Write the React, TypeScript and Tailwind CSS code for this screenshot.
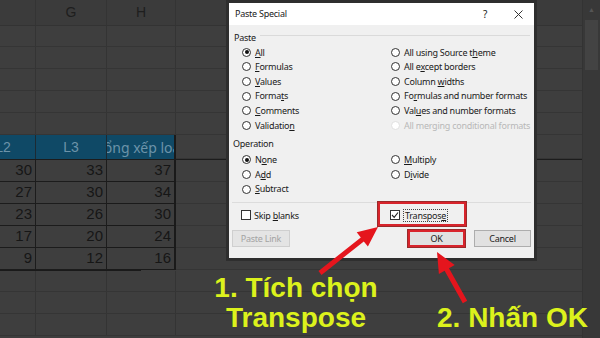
import React from 'react'

// ── Sheet data ────────────────────────────────────────────────────────────────
const rowsData = [
  [30, 33, 37],
  [27, 30, 34],
  [23, 26, 30],
  [17, 20, 24],
  [9, 12, 16],
]

const cell = 'border-r border-[#343434] shrink-0'

function PlainRow({ h }: { h: string }) {
  return (
    <div className={`flex border-b border-[#353535] ${h}`}>
      <div className={`${cell} w-[71px] ml-[-35px]`} />
      <div className={`${cell} w-[71px]`} />
      <div className={`${cell} w-[69px]`} />
      <div className="flex-1" />
    </div>
  )
}

function Sheet() {
  const num = 'flex items-center justify-end pr-[3px] text-[15px] text-[#161616]'
  return (
    <div className="flex h-[338px] w-[600px] bg-[#3e3e3e] overflow-hidden font-['Liberation_Sans',sans-serif]">
      <div className="flex w-[583px] flex-col border-r border-[#333]">
        {/* column headers */}
        <div className="flex h-[26px] border-b border-[#333] bg-[#3b3b3b] text-[14px] text-[#1e1e1e]">
          <div className={`${cell} w-[71px] ml-[-35px]`} />
          <div className={`${cell} w-[71px] flex items-center justify-center`}>G</div>
          <div className={`${cell} w-[69px] flex items-center justify-center`}>H</div>
          <div className="flex-1" />
        </div>
        <PlainRow h="h-[21px]" />
        <PlainRow h="h-[22px]" />
        <PlainRow h="h-[22px]" />
        <PlainRow h="h-[22px]" />
        <PlainRow h="h-[22px]" />
        {/* table header */}
        <div className="flex h-[25px] border-b border-[#1c1c1c]">
          <div className="flex w-[71px] ml-[-35px] shrink-0 items-center justify-center border-r border-[#1c2a33] bg-[#0f4966] pl-[6px] text-[14px] text-[#6c93a9]">L2</div>
          <div className="flex w-[71px] shrink-0 items-center justify-center border-r border-[#1c2a33] bg-[#0f4966] text-[14px] text-[#6c93a9]">L3</div>
          <div className="flex w-[69px] shrink-0 items-center justify-center overflow-hidden whitespace-nowrap border-r-2 border-[#1a1a1a] bg-[#0f4966] text-[14px] text-[#6c93a9] font-['Noto_Sans',sans-serif]">Tổng xếp loại</div>
          <div className="flex-1 border-b border-[#353535]" />
        </div>
        {rowsData.map((r, i) => (
          <div key={i} className="flex h-[22px]">
            <div className={`${num} w-[71px] ml-[-35px] shrink-0 border-r border-b border-[#1c1c1c]`}>{r[0]}</div>
            <div className={`${num} w-[71px] shrink-0 border-r border-b border-[#1c1c1c]`}>{r[1]}</div>
            <div className={`${num} w-[69px] shrink-0 border-r-2 border-b border-[#1a1a1a]`}>{r[2]}</div>
            <div className="flex-1 border-b border-[#353535]" />
          </div>
        ))}
        <div className="border-t border-[#1a1a1a] w-[141px]" />
        <PlainRow h="h-[21px]" />
        <PlainRow h="h-[22px]" />
        <PlainRow h="h-[22px]" />
      </div>
      {/* scrollbar */}
      <div className="flex w-[17px] flex-col bg-[#383838]">
        <div className="flex h-[20px] items-center justify-center text-[7px] text-[#555]">▲</div>
        <div className="mx-[2px] h-[50px] bg-[#434343]" />
      </div>
    </div>
  )
}

// ── Dialog bits ───────────────────────────────────────────────────────────────
function Label({ text, u }: { text: string; u: number }) {
  return (
    <span className="whitespace-nowrap">
      {text.slice(0, u)}
      <span className="underline underline-offset-1">{text[u]}</span>
      {text.slice(u + 1)}
    </span>
  )
}

function Radio({ text, u, on, disabled }: { text: string; u: number; on?: boolean; disabled?: boolean }) {
  return (
    <div className={`flex h-[14.6px] items-center gap-[4px] whitespace-nowrap ${disabled ? 'text-[#b8b8b8]' : 'text-[#1a1a1a]'}`}>
      <span
        className={`flex h-[9px] w-[9px] shrink-0 items-center justify-center rounded-full border bg-white ${disabled ? 'border-[#e0e0e0]' : 'border-[#333]'}`}
      >
        {on && <span className="h-[4px] w-[4px] rounded-full bg-[#111]" />}
      </span>
      {disabled ? <span>{text}</span> : <Label text={text} u={u} />}
    </div>
  )
}

function Dialog() {
  return (
    <div className="absolute left-[226px] top-0 flex h-[261px] w-[311px] flex-col border-[3px] border-[#2e2e2e] bg-[#f0f0f0] font-['Noto_Sans',sans-serif] text-[9px] tracking-[-0.25px] text-[#1a1a1a]">
      {/* title */}
      <div className="flex h-[22px] items-center bg-white pl-[6px] pr-[13px] text-[9px]">
        <span className="flex-1">Paste Special</span>
        <span className="mr-[27px] text-[10px]">?</span>
        <svg width="9" height="9" viewBox="0 0 9 9" className="mr-[-2px]">
          <path d="M0.5 0.5 L8.5 8.5 M8.5 0.5 L0.5 8.5" stroke="#333" strokeWidth="1" />
        </svg>
      </div>
      {/* Paste group */}
      <div className="mt-[6px] flex h-[14px] items-center gap-[4px] pl-[5px] pr-[4px]">
        <span>Paste</span>
        <div className="mb-[6px] h-px flex-1 bg-[#dadada]" />
      </div>
      <div className="grid grid-cols-[149px_1fr] pl-[13px]">
        <div className="flex flex-col">
          <Radio text="All" u={0} on />
          <Radio text="Formulas" u={0} />
          <Radio text="Values" u={0} />
          <Radio text="Formats" u={5} />
          <Radio text="Comments" u={0} />
          <Radio text="Validation" u={9} />
        </div>
        <div className="flex flex-col">
          <Radio text="All using Source theme" u={18} />
          <Radio text="All except borders" u={5} />
          <Radio text="Column widths" u={7} />
          <Radio text="Formulas and number formats" u={2} />
          <Radio text="Values and number formats" u={3} />
          <Radio text="All merging conditional formats" u={0} disabled />
        </div>
      </div>
      {/* Operation group */}
      <div className="mt-[4px] flex h-[14px] items-center pl-[4px]">Operation</div>
      <div className="mt-[2px] grid grid-cols-[149px_1fr] pl-[13px]">
        <div className="flex flex-col">
          <Radio text="None" u={1} on />
          <Radio text="Add" u={1} />
          <Radio text="Subtract" u={0} />
        </div>
        <div className="flex flex-col">
          <Radio text="Multiply" u={0} />
          <Radio text="Divide" u={1} />
        </div>
      </div>
      <div className="mx-[3px] mt-[6px] h-px bg-[#dcdcdc]" />
      {/* checkboxes */}
      <div className="mt-[5px] grid h-[14px] grid-cols-[149px_1fr] pl-[12px]">
        <div className="flex items-center gap-[3px]">
          <span className="h-[10px] w-[10px] border border-[#333] bg-white" />
          <Label text="Skip blanks" u={5} />
        </div>
        <div className="relative flex items-center gap-[3px]">
          <span className="flex h-[10px] w-[10px] items-center justify-center border border-[#333] bg-white">
            <svg width="8" height="8" viewBox="0 0 8 8">
              <path d="M1 4 L3.2 6.3 L7 1.5" fill="none" stroke="#222" strokeWidth="1.1" />
            </svg>
          </span>
          <span className="border border-dotted border-[#444] px-px leading-[11px]">
            <Label text="Transpose" u={8} />
          </span>
          <div className="absolute left-[-12px] top-[-6px] h-[24px] w-[88px] border-2 border-[#d8242c] shadow-[0_0_0_1px_#9a2a2a]" />
        </div>
      </div>
      {/* buttons */}
      <div className="mt-[8px] flex h-[17px] pl-[3px]">
        <div className="flex w-[58px] items-center justify-center border border-[#cfcfcf] bg-[#e4e4e4] text-[#a3a3a3]">Paste Link</div>
        <div className="ml-[118px] flex w-[57px] items-center justify-center border-2 border-[#d8242c] bg-[#e1e1e1] shadow-[0_0_0_1px_#9a2a2a]">OK</div>
        <div className="ml-[9px] flex w-[57px] items-center justify-center border border-[#adadad] bg-[#e1e1e1]">Cancel</div>
      </div>
    </div>
  )
}

// ── App ───────────────────────────────────────────────────────────────────────
export default function App() {
  return (
    <div className="relative h-[338px] w-[600px] overflow-hidden">
      <Sheet />
      <Dialog />
      {/* annotation arrows */}
      <svg className="pointer-events-none absolute left-0 top-0" width="600" height="338" viewBox="0 0 600 338">
        <polygon
          fill="#e5151d"
          points="378,227 356.7,232.3 360.8,237.4 318.5,271 321.5,275 363.8,241.4 367.9,246.5"
        />
        <polygon
          fill="#e5151d"
          points="437,252 454.7,265.1 449,268.3 467.2,300.8 462.8,303.2 444.6,270.7 438.9,273.9"
        />
      </svg>
      <div className="absolute left-[196px] top-[273px] w-[200px] text-center font-['Liberation_Sans',sans-serif] text-[28px] font-bold leading-[30px] text-[#dcf21c]">
        1. Tích chọn
        <br />
        Transpose
      </div>
      <div className="absolute left-[437px] top-[303px] whitespace-nowrap font-['Liberation_Sans',sans-serif] text-[28px] font-bold leading-[30px] text-[#dcf21c]">
        2. Nhấn OK
      </div>
    </div>
  )
}
